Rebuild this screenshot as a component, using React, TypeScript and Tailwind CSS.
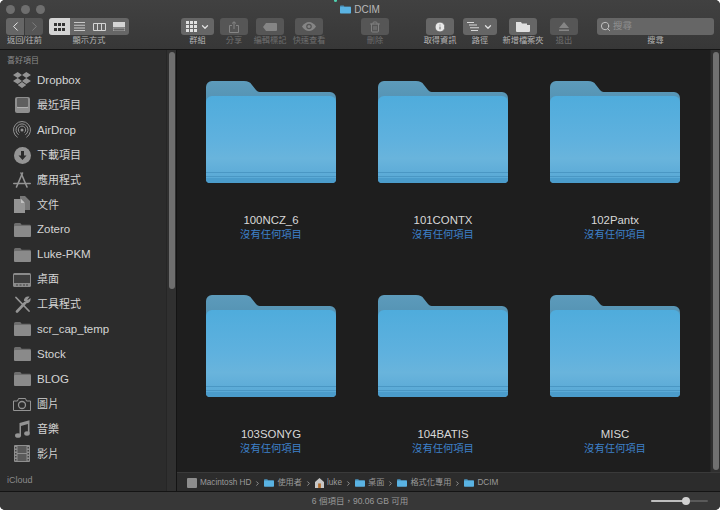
import { ReactNode } from 'react'
import { ChevronLeft, ChevronRight, ChevronDown, Search, Info, Trash2 } from 'lucide-react'

const CJK = "font-['Liberation_Sans','Noto_Sans_CJK_TC',sans-serif]"

function BigFolder() {
    return (
        <svg width="130" height="102" viewBox="0 0 130 102">
            <defs>
                <linearGradient id="front" x1="0" y1="0" x2="0" y2="1">
                    <stop offset="0" stopColor="#4facdc" />
                    <stop offset="0.5" stopColor="#5fb1de" />
                    <stop offset="0.72" stopColor="#69b4dc" />
                    <stop offset="1" stopColor="#56a7d5" />
                </linearGradient>
                <linearGradient id="back" x1="0" y1="0" x2="0" y2="1">
                    <stop offset="0" stopColor="#5d9bbb" />
                    <stop offset="1" stopColor="#4d8cad" />
                </linearGradient>
            </defs>
            <path d="M0 6a6 6 0 0 1 6-6h32c4 0 6 1 8 4l4 5c2 2 3 2 5 2h69a6 6 0 0 1 6 6v20H0z" fill="url(#back)" />
            <path d="M0 21a6 6 0 0 1 6-6h118a6 6 0 0 1 6 6v77a4 4 0 0 1-4 4H4a4 4 0 0 1-4-4z" fill="url(#front)" />
            <rect x="0" y="91" width="130" height="1" fill="#4a97c4" />
            <rect x="0" y="95" width="130" height="1" fill="#4a97c4" />
            <path d="M0 98a4 4 0 0 0 4 4h122a4 4 0 0 0 4-4v-1H0z" fill="#4b9ccb" />
        </svg>
    )
}

function SmallFolder({ color = '#8a8a8a' }: { color?: string }) {
    return (
        <svg width="17" height="14" viewBox="0 0 17 14">
            <path d="M0 1.500A1.500 1.500 0 0 1 1.500 0h4c.8 0 1.200.3 1.600 1l.5.8h8A1.400 1.400 0 0 1 17 3.200V5H0z" fill="#6d6d6d" />
            <rect x="0" y="3" width="17" height="11" rx="1" fill={color} />
        </svg>
    )
}

function BlueFolder({ w = 10, h = 8 }: { w?: number; h?: number }) {
    return (
        <svg width={w} height={h} viewBox="0 0 15 11" className="shrink-0">
            <path d="M0 1a1 1 0 0 1 1-1h4l1 1.300h8a1 1 0 0 1 1 1V4H0z" fill="#4a93bd" />
            <rect x="0" y="2" width="15" height="9" rx="1" fill="#5ab3e3" />
        </svg>
    )
}

const g = '#949494'

const icons: Record<string, ReactNode> = {
    dropbox: (
        <svg width="18" height="16" viewBox="0 0 18 16" fill={g}>
            <path d="M4.700 0 0 3l4.700 3L9 3zM13.300 0 9 3l4.300 3L18 3zM0 9l4.700 3L9 9 4.700 6zM13.300 6 9 9l4.300 3L18 9zM4.700 13 9 16l4.300-3L9 10z" />
        </svg>
    ),
    recent: (
        <svg width="15" height="16" viewBox="0 0 15 16">
            <rect x="0" y="0" width="15" height="16" rx="2" fill="#8f8f8f" />
            <rect x="2" y="1" width="11" height="9" rx="1" fill="#5f5f5f" />
            <path d="M2 10h11v1H2z" fill="#b0b0b0" />
        </svg>
    ),
    airdrop: (
        <svg width="18" height="18" viewBox="0 0 18 18" fill="none" stroke={g} strokeWidth="1">
            <path d="M4.600 16.300a8.500 8.500 0 1 1 8.800 0" />
            <path d="M5.600 13.800a6 6 0 1 1 6.800 0" />
            <path d="M6.600 11.600a3.700 3.700 0 1 1 4.800 0" />
            <circle cx="9" cy="9" r="1.500" fill={g} stroke="none" />
        </svg>
    ),
    download: (
        <svg width="17" height="17" viewBox="0 0 17 17">
            <circle cx="8.500" cy="8.500" r="8.500" fill={g} />
            <path d="M7 4h3v4.500h2.500l-4 4.500-4-4.500H7z" fill="#2b2b2b" />
        </svg>
    ),
    apps: (
        <svg width="18" height="17" viewBox="0 0 18 17" fill="none" stroke={g} strokeWidth="1.600" strokeLinecap="round">
            <path d="M9.500 1 3.500 15" />
            <path d="M8 1l6 14" />
            <path d="M.8 11.500h16.400" />
        </svg>
    ),
    docs: (
        <svg width="17" height="17" viewBox="0 0 17 17">
            <path d="M6 0h5l5 5v9h-5V6H6z" fill="#777" />
            <path d="M0 3h7l4 4v10H0z" fill={g} />
            <path d="M7 3l4 4H7z" fill="#c0c0c0" />
        </svg>
    ),
    desktop: (
        <svg width="18" height="14" viewBox="0 0 18 14">
            <rect x="0" y="0" width="18" height="14" rx="1.500" fill="#8b8b8b" />
            <rect x="1" y="2" width="16" height="8" fill="#3e3e3e" />
            <path d="M3 11.500h2v1H3zM6.500 11.500h2v1h-2zM10 11.500h2v1h-2zM13 11.500h2v1h-2z" fill="#3e3e3e" />
        </svg>
    ),
    tools: (
        <svg width="17" height="17" viewBox="0 0 17 17" fill="none" stroke={g} strokeLinecap="round">
            <path d="M2 1.500 15 15" strokeWidth="1.800" />
            <path d="M3 15.500 11 7" strokeWidth="2.600" />
            <path d="M10.500 4.500a3.400 3.400 0 0 1 4-3.400L12.600 3.400l1.200 1.400 2.200-1.600a3.400 3.400 0 0 1-4 3.400" strokeWidth="1.200" fill={g} />
        </svg>
    ),
    camera: (
        <svg width="18" height="13" viewBox="0 0 18 13" fill="none" stroke={g}>
            <path d="M.5 3h4l1-2.500h7L13.500 3h4v9.500H.5z" />
            <circle cx="9" cy="7" r="3.500" strokeWidth="1.300" />
        </svg>
    ),
    music: (
        <svg width="15" height="18" viewBox="0 0 15 18" fill={g}>
            <path d="M4.500 3 14.500.2V13h-1.600V4L6 6v9.500H4.500z" />
            <ellipse cx="3" cy="15.500" rx="3" ry="2.300" />
            <ellipse cx="12" cy="13.500" rx="2.800" ry="2.200" />
        </svg>
    ),
    film: (
        <svg width="16" height="17" viewBox="0 0 16 17">
            <rect width="16" height="17" rx="1" fill="#8f8f8f" />
            <rect x="3.500" y="1" width="9" height="7" fill="#5a5a5a" />
            <rect x="3.500" y="9" width="9" height="7" fill="#5a5a5a" />
            <path d="M1 2h1.500v1.500H1zM1 5h1.500v1.500H1zM1 8h1.500v1.500H1zM1 11h1.500v1.500H1zM1 14h1.500v1.500H1zM13.500 2H15v1.500h-1.500zM13.500 5H15v1.500h-1.500zM13.500 8H15v1.500h-1.500zM13.500 11H15v1.500h-1.500zM13.500 14H15v1.500h-1.500z" fill="#444" />
        </svg>
    ),
}

const sidebarItems: { icon: ReactNode; label: string; cjk?: boolean }[] = [
    { icon: icons.dropbox, label: 'Dropbox' },
    { icon: icons.recent, label: '最近項目', cjk: true },
    { icon: icons.airdrop, label: 'AirDrop' },
    { icon: icons.download, label: '下載項目', cjk: true },
    { icon: icons.apps, label: '應用程式', cjk: true },
    { icon: icons.docs, label: '文件', cjk: true },
    { icon: <SmallFolder />, label: 'Zotero' },
    { icon: <SmallFolder />, label: 'Luke-PKM' },
    { icon: icons.desktop, label: '桌面', cjk: true },
    { icon: icons.tools, label: '工具程式', cjk: true },
    { icon: <SmallFolder />, label: 'scr_cap_temp' },
    { icon: <SmallFolder />, label: 'Stock' },
    { icon: <SmallFolder />, label: 'BLOG' },
    { icon: icons.camera, label: '圖片', cjk: true },
    { icon: icons.music, label: '音樂', cjk: true },
    { icon: icons.film, label: '影片', cjk: true },
]

const folders = ['100NCZ_6', '101CONTX', '102Pantx', '103SONYG', '104BATIS', 'MISC']

// label is wider than the button on some items, it just overflows centered
function ToolItem({ label, width, dim, className, children }: { label: string; width: string; dim?: boolean; className?: string; children: ReactNode }) {
    return (
        <div className={width + " shrink-0 flex flex-col items-center " + (className ?? "")}>
            <div className={"w-full h-[17px] rounded-[3px] flex items-center justify-center " + (dim ? "bg-[#565656]" : "bg-[#666666]")}>
                {children}
            </div>
            <div className={"text-[8.2px] leading-[12px] whitespace-nowrap " + (dim ? "text-[#6f6f6f]" : "text-[#b4b4b4]")}>{label}</div>
        </div>
    )
}

export default function App() {
    return (
        <div className={"w-[720px] h-[510px] bg-white overflow-hidden " + CJK}>
            <div className="w-full h-full flex flex-col rounded-[5px] overflow-hidden bg-[#2b2b2b] relative">
                {/* title bar + toolbar */}
                <div className="h-[50px] shrink-0 bg-gradient-to-b from-[#414141] to-[#373737] border-b border-[#141414] px-[6px]">
                    <div className="h-[18px] flex items-center">
                        <div className="w-[39px] flex gap-[6px]">
                            <div className="w-[9px] h-[9px] rounded-full bg-[#6e6e6e]"></div>
                            <div className="w-[9px] h-[9px] rounded-full bg-[#6e6e6e]"></div>
                            <div className="w-[9px] h-[9px] rounded-full bg-[#6e6e6e]"></div>
                        </div>
                        <div className="flex-1 flex items-center justify-center gap-[3px] text-[10px] text-[#b9b9b9]">
                            <BlueFolder w={11} h={9} />
                            <span>DCIM</span>
                        </div>
                        <div className="w-[39px]"></div>
                    </div>
                    <div className="flex items-start">
                        <div className="flex flex-col items-center w-[37px] shrink-0">
                            <div className="flex gap-px">
                                <div className="w-[18px] h-[17px] rounded-l-[3px] bg-[#666666] flex items-center justify-center">
                                    <ChevronLeft size={15} strokeWidth={1.5} className="text-[#f0f0f0]" />
                                </div>
                                <div className="w-[18px] h-[17px] rounded-r-[3px] bg-[#565656] flex items-center justify-center">
                                    <ChevronRight size={15} strokeWidth={1.5} className="text-[#808080]" />
                                </div>
                            </div>
                            <div className="text-[8.2px] leading-[12px] text-[#b4b4b4] whitespace-nowrap">返回/往前</div>
                        </div>
                        <div className="ml-[6px] w-[80px] shrink-0 flex flex-col items-center">
                            <div className="flex h-[17px] w-[80px] rounded-[3px] bg-[#666666] overflow-hidden">
                                <div className="w-[21px] bg-[#d5d5d5] flex items-center justify-center">
                                    <svg width="11" height="8" viewBox="0 0 11 8" fill="#333">
                                        <path d="M0 0h3v3H0zM4 0h3v3H4zM8 0h3v3H8zM0 5h3v3H0zM4 5h3v3H4zM8 5h3v3H8z" />
                                    </svg>
                                </div>
                                <div className="w-[19px] flex items-center justify-center">
                                    <svg width="11" height="9" viewBox="0 0 11 9" fill="#c8c8c8">
                                        <path d="M0 0h11v1H0zM0 2.700h11v1H0zM0 5.400h11v1H0zM0 8h11v1H0z" />
                                    </svg>
                                </div>
                                <div className="w-[20px] flex items-center justify-center">
                                    <svg width="13" height="8" viewBox="0 0 13 8" fill="none" stroke="#d5d5d5">
                                        <path d="M.5.500h12v7H.5zM4.500.500v7M8.500.500v7" />
                                    </svg>
                                </div>
                                <div className="w-[20px] flex items-center justify-center">
                                    <svg width="12" height="9" viewBox="0 0 12 9">
                                        <rect width="12" height="5" fill="#d5d5d5" />
                                        <rect y="6" width="12" height="3" fill="none" stroke="#d5d5d5" strokeWidth="0.600" />
                                    </svg>
                                </div>
                            </div>
                            <div className="text-[8.2px] leading-[12px] text-[#b4b4b4]">顯示方式</div>
                        </div>
                        <ToolItem label="群組" width="w-[33px]" className="ml-[52px]">
                            <svg width="11" height="11" viewBox="0 0 11 11" fill="#e0e0e0" className="mr-[3px]">
                                <path d="M0 0h3v3H0zM4 0h3v3H4zM8 0h3v3H8zM0 4h3v3H0zM4 4h3v3H4zM8 4h3v3H8zM0 8h3v3H0zM4 8h3v3H4zM8 8h3v3H8z" />
                            </svg>
                            <ChevronDown size={10} strokeWidth={3} className="text-[#e0e0e0]" />
                        </ToolItem>
                        <ToolItem label="分享" width="w-[28px]" dim className="ml-[6px]">
                            <svg width="10" height="12" viewBox="0 0 10 12" fill="none" stroke="#858585">
                                <path d="M3 4.500H.5v7h9v-7H7M5 8V.8M3 2.500 5 .8l2 1.700" />
                            </svg>
                        </ToolItem>
                        <ToolItem label="編輯標記" width="w-[28px]" dim className="ml-[8px]">
                            <svg width="14" height="8" viewBox="0 0 14 8" fill="#858585">
                                <path d="M3 0h10a1 1 0 0 1 1 1v6a1 1 0 0 1-1 1H3L0 4z" />
                            </svg>
                        </ToolItem>
                        <ToolItem label="快速查看" width="w-[28px]" dim className="ml-[11px]">
                            <svg width="14" height="9" viewBox="0 0 14 9">
                                <path d="M0 4.500C2 1.500 4.500 0 7 0s5 1.500 7 4.500C12 7.500 9.500 9 7 9S2 7.500 0 4.500z" fill="#858585" />
                                <circle cx="7" cy="4.500" r="2.800" fill="#565656" />
                                <circle cx="7" cy="4.500" r="1.500" fill="#858585" />
                            </svg>
                        </ToolItem>
                        <ToolItem label="刪除" width="w-[28px]" dim className="ml-[38px]">
                            <Trash2 size={12} className="text-[#808080]" />
                        </ToolItem>
                        <ToolItem label="取得資訊" width="w-[28px]" className="ml-[37px]">
                            <Info size={12} fill="#e8e8e8" className="text-[#666666]" />
                        </ToolItem>
                        <ToolItem label="路徑" width="w-[34px]" className="ml-[9px]">
                            <svg width="12" height="9" viewBox="0 0 12 9" fill="#d8d8d8" className="mr-[4px]">
                                <path d="M0 0h7v1H0zM2 2.600h8v1H2zM3 5.200h9v1H3zM4 8h7v1H4z" />
                            </svg>
                            <ChevronDown size={10} strokeWidth={3} className="text-[#e0e0e0]" />
                        </ToolItem>
                        <ToolItem label="新增檔案夾" width="w-[28px]" className="ml-[12px]">
                            <svg width="14" height="11" viewBox="0 0 14 11" fill="#e0e0e0">
                                <path d="M0 1h5l1 1.500h5v1.500h3v6a1 1 0 0 1-1 1H1a1 1 0 0 1-1-1z" />
                            </svg>
                        </ToolItem>
                        <ToolItem label="退出" width="w-[28px]" dim className="ml-[13px]">
                            <svg width="10" height="9" viewBox="0 0 10 9" fill="#858585">
                                <path d="M5 0l5 6H0zM0 7.500h10V9H0z" />
                            </svg>
                        </ToolItem>
                        <div className="ml-[19px] w-[117px] shrink-0 flex flex-col items-center">
                            <div className="w-full h-[17px] rounded-[3px] bg-[#666666] flex items-center pl-[3px] gap-[2px]">
                                <Search size={11} className="text-[#c9c9c9]" />
                                <span className="text-[9.5px] text-[#8f8f8f]">搜尋</span>
                            </div>
                            <div className="text-[8.2px] leading-[12px] text-[#b4b4b4]">搜尋</div>
                        </div>
                    </div>
                </div>

                <div className="flex-1 flex min-h-0">
                    {/* sidebar */}
                    <div className="w-[177px] shrink-0 flex border-r border-[#141414] bg-[#2c2c2c]">
                        <div className="flex-1 min-w-0">
                            <div className="pl-[7px] pt-[4px] h-[18px] text-[8px] leading-[13px] text-[#8b8b8b]">喜好項目</div>
                            <div className="flex flex-col">
                                {sidebarItems.map((item) => (
                                    <div key={item.label} className="h-[24.900px] flex items-center">
                                        <div className="w-[37px] pl-[13px] shrink-0 flex items-center">
                                            <div className="w-[18px] flex justify-center">{item.icon}</div>
                                        </div>
                                        <span className={(item.cjk ? "text-[11px]" : "text-[11.5px]") + " text-[#d4d4d4] whitespace-nowrap"}>{item.label}</span>
                                    </div>
                                ))}
                            </div>
                            <div className="pl-[7px] pt-[8px] text-[9px] leading-[13px] text-[#8b8b8b]">iCloud</div>
                        </div>
                        <div className="w-[10px] shrink-0 bg-[#303030] border-l border-[#262626] pt-[2px] flex justify-center">
                            <div className="w-[6px] h-[237px] rounded-full bg-[#6f6f6f]"></div>
                        </div>
                    </div>

                    {/* main */}
                    <div className="flex-1 min-w-0 flex flex-col bg-[#1e1e1e]">
                        <div className="flex-1 min-h-0 flex">
                            <div className="flex-1 min-w-0 grid grid-cols-[172px_172px_172px] grid-rows-[214px_214px] pl-[8px] pt-[31px]">
                                {folders.map((name) => (
                                    <div key={name} className="flex flex-col items-center">
                                        <BigFolder />
                                        <div className="mt-[30px] text-[11.4px] leading-[14px] text-[#d8d8d8]">{name}</div>
                                        <div className="mt-px text-[10.3px] leading-[14px] text-[#3d80c9]">沒有任何項目</div>
                                    </div>
                                ))}
                            </div>
                            <div className="w-[10px] shrink-0 bg-[#2f2f2f] border-l border-[#262626] py-[2px] flex justify-center">
                                <div className="w-[6px] rounded-full bg-[#707070]"></div>
                            </div>
                        </div>
                        {/* path bar */}
                        <div className="h-[19px] shrink-0 bg-[#2c2c2c] border-t border-[#3a3a3a] flex items-center pl-[10px] pt-[2px] gap-[3px] text-[8.2px] text-[#9a9a9a] whitespace-nowrap">
                            <div className="w-[10px] h-[10px] bg-[#8d8d8d] rounded-[1px]"></div>
                            <span>Macintosh HD</span>
                            <ChevronRight size={7} strokeWidth={3} />
                            <BlueFolder />
                            <span>使用者</span>
                            <ChevronRight size={7} strokeWidth={3} />
                            <svg width="9" height="10" viewBox="0 0 10 11">
                                <path d="M5 0l5 4.500V11H0V4.500z" fill="#c7c7c7" />
                                <rect x="3.500" y="6" width="3" height="5" fill="#b06a28" />
                            </svg>
                            <span>luke</span>
                            <ChevronRight size={7} strokeWidth={3} />
                            <BlueFolder />
                            <span>桌面</span>
                            <ChevronRight size={7} strokeWidth={3} />
                            <BlueFolder />
                            <span>格式化專用</span>
                            <ChevronRight size={7} strokeWidth={3} />
                            <BlueFolder />
                            <span>DCIM</span>
                        </div>
                    </div>
                </div>

                {/* status bar */}
                <div className="h-[19px] shrink-0 bg-[#373737] border-t border-[#141414] relative flex items-center justify-center text-[8.5px] text-[#9a9a9a]">
                    <span>6 個項目，90.06 GB 可用</span>
                    <div className="absolute left-[651px] top-[8px] w-[57px] h-[2px] bg-[#5a5a5a] rounded-full">
                        <div className="w-[35px] h-full bg-[#bdbdbd] rounded-full"></div>
                        <div className="absolute left-[31px] top-[-3px] w-[8px] h-[8px] rounded-full bg-[#d0d0d0]"></div>
                    </div>
                </div>
                <div className="absolute left-[334px] top-0 w-[3px] h-[2px] rounded-b-full bg-[#4fd0b0]"></div>
            </div>
        </div>
    )
}
